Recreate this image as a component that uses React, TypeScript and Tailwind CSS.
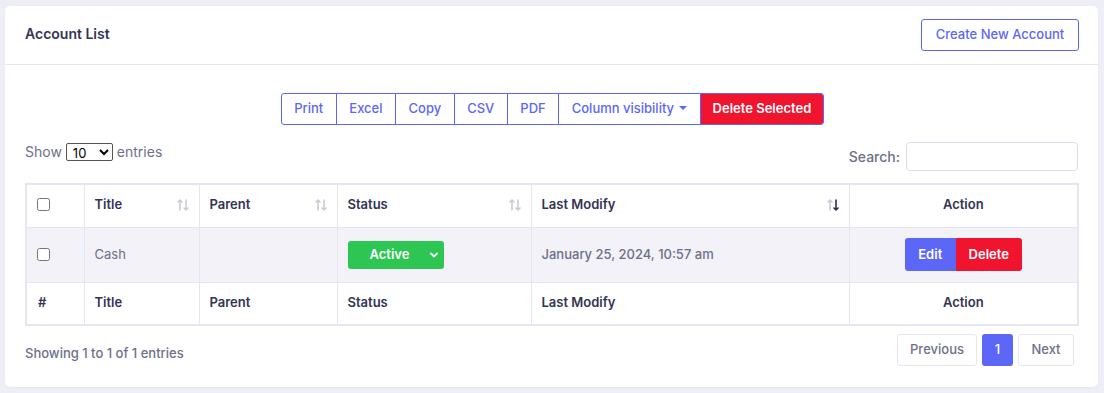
import React from "react";

const blue = "#5c67f7";

// sort arrows used in datatable headers
function SortIcon({ active }: { active?: boolean }) {
  return (
    <svg width="12" height="14" viewBox="0 0 12 14" className="shrink-0">
      <g fill="none" strokeWidth="1.6" strokeLinecap="round" strokeLinejoin="round">
        <path d="M3 12V2M1 4l2-2 2 2" stroke="#c9ccd8" />
        <path d="M9 2v10M7 10l2 2 2-2" stroke={active ? "#2f3150" : "#c9ccd8"} />
      </g>
    </svg>
  );
}

const headCols = [
  { label: "Title", w: "w-[115px]", sort: true },
  { label: "Parent", w: "w-[138px]", sort: true },
  { label: "Status", w: "w-[194px]", sort: true },
  { label: "Last Modify", w: "w-[318px]", sort: true, active: true },
];

export default function App() {
  return (
    <div
      className="h-[393px] w-[1104px] bg-[#eeeef6] pt-[6px] pl-[5px] pr-[6px] text-[#333452]"
      style={{ fontFamily: "Inter, 'Noto Sans', sans-serif" }}
    >
      <div className="h-[381px] rounded-[5px] bg-white shadow-[0_1px_2px_rgba(0,0,0,0.04)]">
        {/* ── Header ── */}
        <div className="flex h-[59px] items-center justify-between border-b border-[#e6e6f2] pl-[20px] pr-[19px]">
          <h1 className="-mt-[3px] text-[14px] font-semibold text-[#333452]">Account List</h1>
          <button className="h-[32px] w-[158px] rounded-[3px] border border-[#5c67f7] text-[13px] font-medium text-[#5c67f7]">
            Create New Account
          </button>
        </div>

        <div className="px-[20px] pt-[28px]">
          {/* ── Export buttons ── */}
          <div className="flex justify-center pl-[2px]">
            <div className="flex h-[32px] overflow-hidden rounded-[3px] border border-[#5c67f7] text-[13px] font-medium">
              {["Print", "Excel", "Copy", "CSV", "PDF"].map((b, i) => (
                <div
                  key={b}
                  className={`flex items-center px-[12.5px] text-[#5c67f7] ${i > 0 ? "border-l border-[#5c67f7]" : ""}`}
                >
                  {b}
                </div>
              ))}
              <div className="flex items-center gap-[5px] border-l border-[#5c67f7] px-[12.5px] text-[#5c67f7]">
                Column visibility
                <span className="mt-[-2px] inline-block border-x-[4px] border-t-[4px] border-x-transparent border-t-[#5c67f7]" />
              </div>
              <div className="flex items-center border-l border-[#5c67f7] bg-[#f0142f] px-[12px] font-semibold text-white">
                Delete Selected
              </div>
            </div>
          </div>

          {/* ── Length + search ── */}
          <div className="mt-[17px] flex h-[29px] items-start justify-between">
            <div className="-mt-[1px] flex items-center gap-[4px] text-[14px] text-[#6e7089]">
              Show
              <select
                defaultValue="10"
                className="h-[18px] w-[47px] rounded-[2px] border border-[#555] bg-white px-[2px] text-[13px] text-black"
                style={{ appearance: "auto" }}
              >
                <option>10</option>
              </select>
              entries
            </div>
            <div className="flex items-center gap-[6px] text-[14px] font-medium text-[#6e7089]">
              Search:
              <input className="h-[29px] w-[172px] rounded-[4px] border border-[#dcdcec]" />
            </div>
          </div>

          {/* ── Table ── */}
          <table className="mt-[12px] w-[1054px] border-collapse border-2 border-[#e6e6f2] text-[13px]">
            <thead>
              <tr className="h-[43px]">
                <th className="w-[58px] border border-[#e6e6f2] pl-[10px] text-left align-middle">
                  <input type="checkbox" className="-mt-[2px] block h-[13px] w-[13px]" />
                </th>
                {headCols.map((c) => (
                  <th key={c.label} className={`${c.w} border border-[#e6e6f2] px-[10px] pb-[2px] text-left font-semibold`}>
                    <div className="flex items-center justify-between">
                      {c.label}
                      <SortIcon active={c.active} />
                    </div>
                  </th>
                ))}
                <th className="border border-[#e6e6f2] pb-[2px] text-center font-semibold">Action</th>
              </tr>
            </thead>
            <tbody>
              <tr className="h-[55px] bg-[#f2f2f8]">
                <td className="border border-[#e6e6f2] pl-[10px]">
                  <input type="checkbox" className="block h-[13px] w-[13px]" />
                </td>
                <td className="border border-[#e6e6f2] px-[10px] text-[#6e7089]">Cash</td>
                <td className="border border-[#e6e6f2]" />
                <td className="border border-[#e6e6f2] px-[10px]">
                  <div className="flex h-[28px] w-[96px] items-center justify-between rounded-[3px] bg-[#2dc653] pl-[22px] pr-[5px] text-[13px] font-semibold text-white">
                    Active
                    <svg width="10" height="10" viewBox="0 0 10 10">
                      <path d="M2 3.5l3 3 3-3" fill="none" stroke="white" strokeWidth="1.8" strokeLinecap="round" strokeLinejoin="round" />
                    </svg>
                  </div>
                </td>
                <td className="border border-[#e6e6f2] px-[10px] font-medium text-[#6e7089]">January 25, 2024, 10:57 am</td>
                <td className="border border-[#e6e6f2]">
                  <div className="flex justify-center">
                    <div className="flex h-[33px] overflow-hidden rounded-[3px] text-[13px] font-semibold text-white">
                      <span className="flex w-[51px] items-center justify-center bg-[#5c67f7]">Edit</span>
                      <span className="flex w-[66px] items-center justify-center bg-[#f0142f]">Delete</span>
                    </div>
                  </div>
                </td>
              </tr>
            </tbody>
            <tfoot>
              <tr className="h-[43px] font-semibold">
                <td className="border border-[#e6e6f2] pb-[2px] pl-[11px]">#</td>
                <td className="border border-[#e6e6f2] px-[10px] pb-[2px]">Title</td>
                <td className="border border-[#e6e6f2] px-[10px] pb-[2px]">Parent</td>
                <td className="border border-[#e6e6f2] px-[10px] pb-[2px]">Status</td>
                <td className="border border-[#e6e6f2] px-[10px] pb-[2px]">Last Modify</td>
                <td className="border border-[#e6e6f2] pb-[2px] text-center">Action</td>
              </tr>
            </tfoot>
          </table>

          {/* ── Info + pagination ── */}
          <div className="mt-[8px] flex items-start justify-between">
            <div className="mt-[10px] text-[13px] font-medium text-[#6e7089]">Showing 1 to 1 of 1 entries</div>
            <div className="mr-[4px] flex gap-[5px] text-[13px] font-medium">
              <span className="flex h-[32px] w-[80px] items-center justify-center rounded-[3px] border border-[#e6e6f2] text-[#6e7089]">
                Previous
              </span>
              <span className="flex h-[32px] w-[31px] items-center justify-center rounded-[3px] text-white" style={{ background: blue }}>
                1
              </span>
              <span className="flex h-[32px] w-[56px] items-center justify-center rounded-[3px] border border-[#e6e6f2] text-[#6e7089]">
                Next
              </span>
            </div>
          </div>
        </div>
      </div>
    </div>
  );
}
